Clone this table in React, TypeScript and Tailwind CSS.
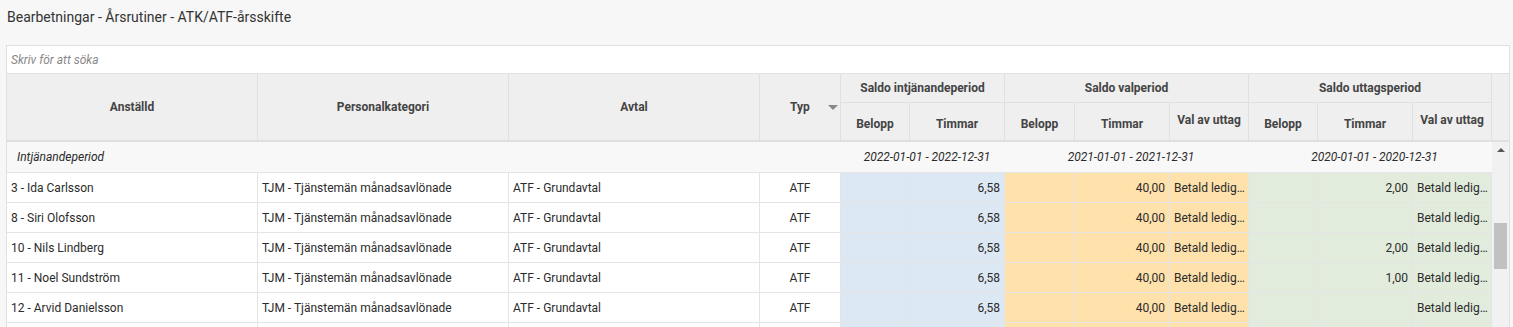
import React from "react";

const cols =
  "grid grid-cols-[251px_251px_251px_81px_69px_95px_70px_95px_79px_69px_95px_79px]";

type Row = {
  name: string;
  timIntj: string;
  timVal: string;
  timUttag: string;
};

const rows: Row[] = [
  { name: "3 - Ida Carlsson", timIntj: "6,58", timVal: "40,00", timUttag: "2,00" },
  { name: "8 - Siri Olofsson", timIntj: "6,58", timVal: "40,00", timUttag: "" },
  { name: "10 - Nils Lindberg", timIntj: "6,58", timVal: "40,00", timUttag: "2,00" },
  { name: "11 - Noel Sundström", timIntj: "6,58", timVal: "40,00", timUttag: "1,00" },
  { name: "12 - Arvid Danielsson", timIntj: "6,58", timVal: "40,00", timUttag: "" },
];

function Th({ children, className = "" }: { children?: React.ReactNode; className?: string }) {
  return (
    <div
      className={`flex items-center justify-center border-r border-b border-[#e0e0e0] px-1 text-center text-xs font-bold text-[#444] ${className}`}
    >
      {children}
    </div>
  );
}

function Td({ children, className = "" }: { children?: React.ReactNode; className?: string }) {
  return (
    <div
      className={`flex h-[30px] items-center border-r border-b border-[#e4e4e4] px-1 text-xs text-[#2b2b2b] ${className}`}
    >
      {children}
    </div>
  );
}

export default function App() {
  return (
    <div className="h-[327px] overflow-hidden bg-[#f7f7f7] font-['Roboto',sans-serif]">
      <h1 className="px-[7px] pt-[8px] text-sm leading-[18px] text-[#333]">
        Bearbetningar - Årsrutiner - ATK/ATF-årsskifte
      </h1>

      <div className="ml-[6px] mt-[19px] w-[1504px] border border-[#e0e0e0] bg-white">
        <div className="flex h-[28px] items-center border-b border-[#e0e0e0] px-1 text-xs italic text-[#888]">
          Skriv för att söka
        </div>

        {/* header */}
        <div className="flex border-b-2 border-[#e0e0e0] bg-[#efefef]">
          <div className={`${cols} grid-rows-[29px_37px]`}>
            <Th className="row-span-2 border-b-0">Anställd</Th>
            <Th className="row-span-2 border-b-0">Personalkategori</Th>
            <Th className="row-span-2 border-b-0">Avtal</Th>
            <Th className="relative row-span-2 border-b-0">
              <span>Typ</span>
              <span className="absolute right-[2px] top-[31px] h-0 w-0 border-x-[5px] border-t-[5px] border-x-transparent border-t-[#888]" />
            </Th>
            <Th className="col-span-2">Saldo intjänandeperiod</Th>
            <Th className="col-span-3">Saldo valperiod</Th>
            <Th className="col-span-3">Saldo uttagsperiod</Th>
            <Th className="border-b-0 pt-1">Belopp</Th>
            <Th className="border-b-0 pt-1">Timmar</Th>
            <Th className="border-b-0 pt-1">Belopp</Th>
            <Th className="border-b-0 pt-1">Timmar</Th>
            <Th className="border-b-0 pb-1">Val av uttag</Th>
            <Th className="border-b-0 pt-1">Belopp</Th>
            <Th className="border-b-0 pt-1">Timmar</Th>
            <Th className="border-b-0 pb-1">Val av uttag</Th>
          </div>
          <div className="w-[17px]" />
        </div>

        {/* body */}
        <div className="flex">
          <div className="w-[1485px]">
            <div className={`${cols} h-[31px] border-b border-[#e4e4e4] bg-[#f8f8f8] text-xs italic text-[#2b2b2b]`}>
              <div className="col-span-4 flex items-center pl-[10px]">Intjänandeperiod</div>
              <div className="col-span-2 flex items-center justify-center pl-2">2022-01-01 - 2022-12-31</div>
              <div className="col-span-3 flex items-center justify-center pl-2">2021-01-01 - 2021-12-31</div>
              <div className="col-span-3 flex items-center justify-center pl-2">2020-01-01 - 2020-12-31</div>
            </div>
            {rows.map((r) => (
              <div key={r.name} className={cols}>
                <Td>{r.name}</Td>
                <Td>TJM - Tjänstemän månadsavlönade</Td>
                <Td>ATF - Grundavtal</Td>
                <Td className="justify-center">ATF</Td>
                <Td className="bg-[#dce8f3]" />
                <Td className="justify-end bg-[#dce8f3]">{r.timIntj}</Td>
                <Td className="bg-[#fee1ab]" />
                <Td className="justify-end bg-[#fee1ab]">{r.timVal}</Td>
                <Td className="whitespace-nowrap bg-[#fee1ab] pr-0">Betald ledig…</Td>
                <Td className="bg-[#e2ecdc]" />
                <Td className="justify-end bg-[#e2ecdc]">{r.timUttag}</Td>
                <Td className="whitespace-nowrap bg-[#e2ecdc] pr-0">Betald ledig…</Td>
              </div>
            ))}
            {/* next row, scrolled out of view */}
            <div className={cols}>
              <Td />
              <Td />
              <Td />
              <Td />
              <Td className="bg-[#dce8f3]" />
              <Td className="bg-[#dce8f3]" />
              <Td className="bg-[#fee1ab]" />
              <Td className="bg-[#fee1ab]" />
              <Td className="bg-[#fee1ab]" />
              <Td className="bg-[#e2ecdc]" />
              <Td className="bg-[#e2ecdc]" />
              <Td className="bg-[#e2ecdc]" />
            </div>
          </div>
          <div className="relative w-[17px] bg-[#f1f1f1]">
            <span className="absolute left-[5px] top-[6px] h-0 w-0 border-x-[4px] border-b-[4px] border-x-transparent border-b-[#555]" />
            <div className="absolute left-[2px] top-[81px] h-[46px] w-[13px] bg-[#c1c1c1]" />
          </div>
        </div>
      </div>
    </div>
  );
}
